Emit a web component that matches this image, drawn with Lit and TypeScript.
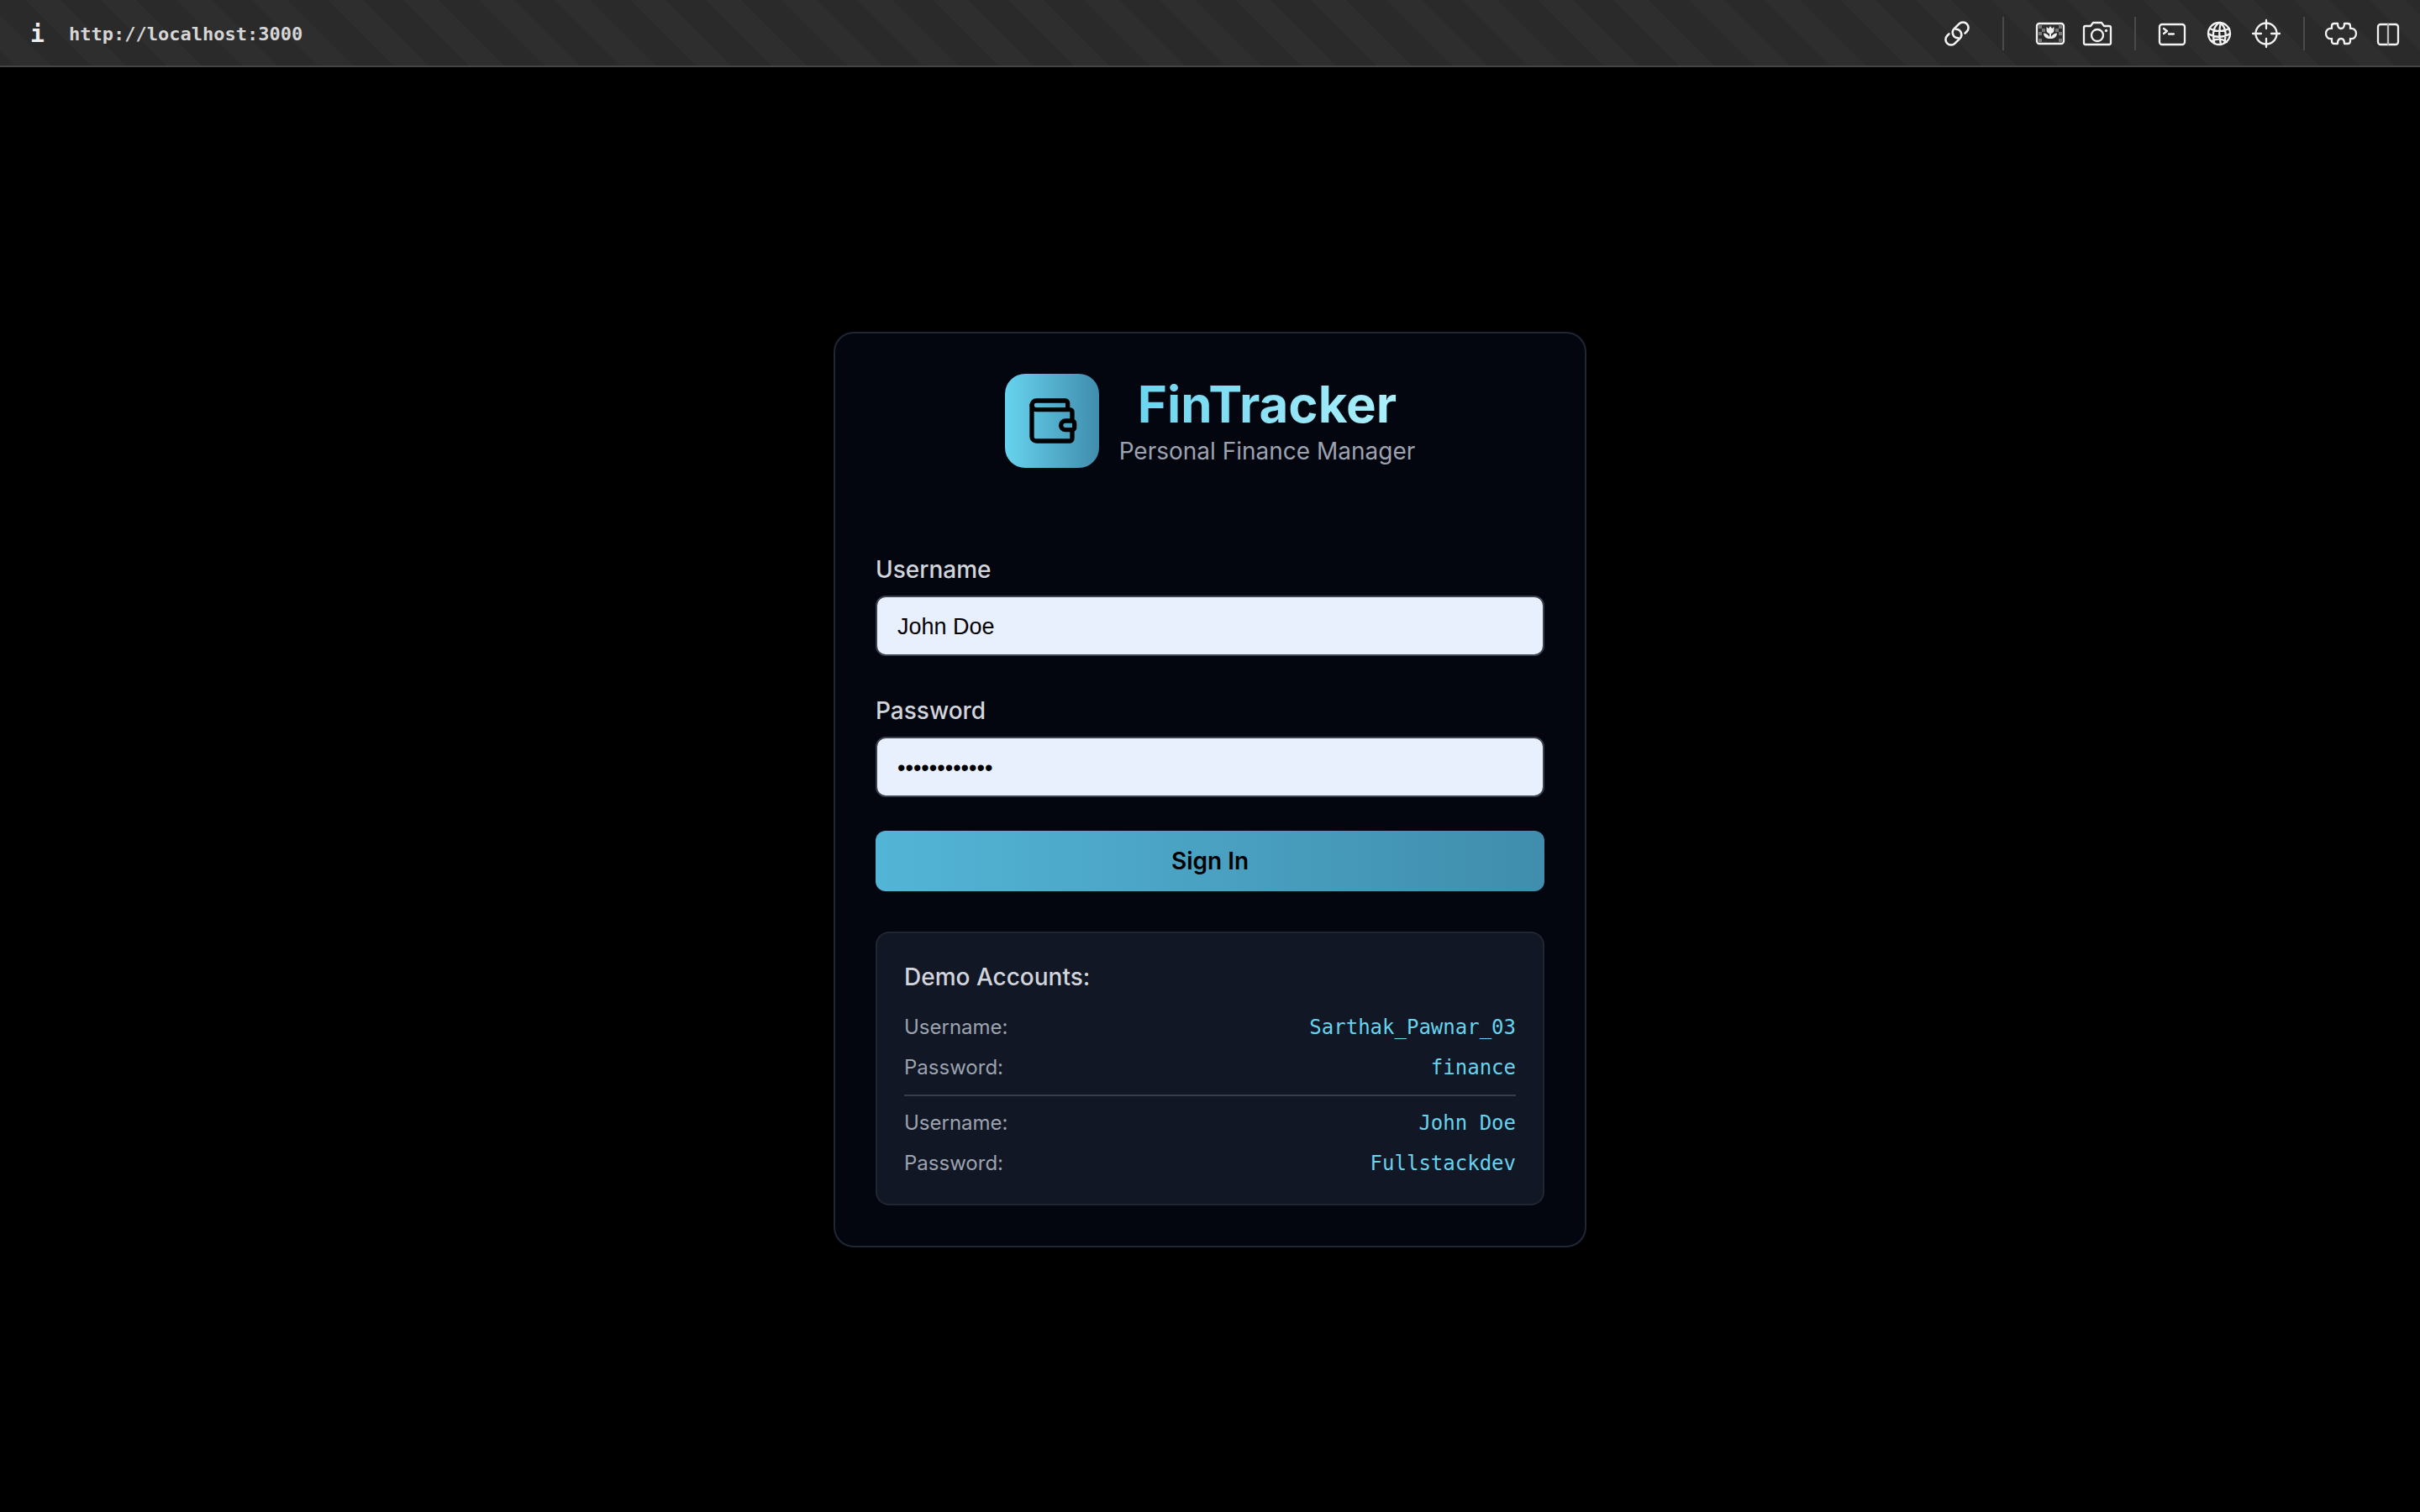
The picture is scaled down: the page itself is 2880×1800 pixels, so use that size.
import { LitElement, html, css, svg } from "lit";
import { customElement } from "lit/decorators.js";

const icons = {
  link: svg`<g transform="translate(22 22) rotate(-45)" stroke-width="2.600">
    <path d="M7 6.500H10a6.500 6.500 0 0 0 0-13H1.800A6.500 6.500 0 0 0-2.800 4.600"/>
    <path d="M7 6.500H10a6.500 6.500 0 0 0 0-13H1.800A6.500 6.500 0 0 0-2.800 4.600" transform="rotate(180)"/></g>`,
  picture: svg`<rect x="6" y="10" width="32" height="24" rx="3"/>
    <g fill="#777" stroke="none">${[0, 1, 2, 3, 4].map((r) =>
      [0, 1, 2, 3, 4, 5, 6].map((c) => ((r + c) % 2 ? "" : svg`<rect x=${8 + c * 4} y=${12 + r * 4} width="4" height="4"/>`)),
    )}</g>
    <path fill="#2b2b2b" stroke="none" d="M16 12h12v8l4 2v6l-5 4H17l-5-4v-6l4-2z"/>
    <path fill="#eee" stroke="none" d="M17.500 14l2.500 2 2-3 2 3 2.500-2v4a4.500 4.500 0 0 1-3.500 4v4c1.500-3 4-4.500 7-4.500 0 4-3 6.500-7 6.500h-2c-4 0-7-2.500-7-6.500 3 0 5.500 1.500 7 4.500v-4a4.500 4.500 0 0 1-3.500-4z"/>`,
  camera: svg`<path d="M8 13h6l3-4h10l3 4h6a2 2 0 0 1 2 2v18a2 2 0 0 1-2 2H8a2 2 0 0 1-2-2V15a2 2 0 0 1 2-2z"/>
    <circle cx="22" cy="24" r="7"/><circle cx="32.500" cy="18.500" r="1.700" fill="#eee" stroke="none"/>`,
  terminal: svg`<rect x="7" y="11" width="30" height="24" rx="3"/><path d="M12 16l4 3-4 3M18 22.500h6"/>`,
  globe: svg`<circle cx="22" cy="22" r="13"/>
    <path d="M22 9c-6 4-9 12-5.500 25M24 9c-2 7-2.500 16 0 26M23 9c6 4 8.500 13 5 24M11 16c7 4 15 4 23 0M9 22c8 5 18 5 26 0M13 31c6-3 13-3 18 1"/>`,
  target: svg`<circle cx="22" cy="22" r="12.500"/><path d="M22 6v10M22 28v10M6 22h10M28 22h10"/>`,
  puzzle: svg`<path d="M14 10h4c0 4 1 6 4 6s4-2 4-6h4c2 0 3 1 3 3v3c4-1 7 2 7 6s-3 7-7 6v3c0 2-1 3-3 3h-4c0-4-1-6-4-6s-4 2-4 6h-4c-2 0-3-1-3-3v-3c-4 1-7-2-7-6s3-7 7-6v-3c0-2 1-3 3-3z"/>`,
  columns: svg`<rect x="10" y="11" width="24" height="24" rx="3"/><path d="M22 11v24" stroke="#bbb"/>`,
};

const accounts = [
  { user: "Sarthak_Pawnar_03", pass: "finance" },
  { user: "John Doe", pass: "Fullstackdev" },
];

@customElement("app-root")
export class AppRoot extends LitElement {
  static styles = css`
    :host {
      display: flex;
      flex-direction: column;
      min-height: 100vh;
      background: #000;
      color: #d1d5db;
      font-family: Inter, sans-serif;
      font-size: 28px;
      line-height: 40px;
    }
    * { box-sizing: border-box; }
    .toolbar {
      display: flex;
      align-items: center;
      justify-content: space-between;
      height: 80px;
      padding: 2px 16px 0 36px;
      border-bottom: 2px solid #444;
      background: linear-gradient(45deg, #2a2a2a 17%, #2e2e2e 17% 40%, #2a2a2a 40% 67%, #2e2e2e 67% 90%, #2a2a2a 90%) 0 0 / 90px 90px;
    }
    .address { display: flex; align-items: center; gap: 30px; padding-top: 2px; font: 700 22px/28px "DejaVu Sans Mono", monospace; color: #d6d6d6; }
    .info, .tool { display: block; border: 0; padding: 0; background: none; color: #eee; }
    .info { width: 16px; font: 700 28px/28px "DejaVu Sans Mono", monospace; }
    .url { font: inherit; color: inherit; text-decoration: none; }
    .tools { display: flex; align-items: center; }
    .group { display: flex; align-items: center; gap: 12px; height: 40px; }
    .group + .group { margin-left: 22px; padding-left: 21px; border-left: 2px solid #4a4a4a; }
    .group + .group.wide { margin-left: 32px; padding-left: 33px; }
    .tool { width: 44px; height: 44px; }
    .tool svg { display: block; width: 44px; height: 44px; fill: none; stroke: #f2f2f2; stroke-width: 2.3; stroke-linecap: round; stroke-linejoin: round; }
    .stage { flex: 1; display: grid; place-items: center; padding: 32px; }
    .card {
      width: 100%;
      max-width: 896px;
      padding: 48px;
      border: 2px solid #1f2733;
      border-radius: 24px;
      background: #03050f;
    }
    .brand { display: flex; justify-content: center; gap: 24px; margin-bottom: 96px; text-align: center; }
    .logo {
      display: grid;
      place-items: center;
      width: 112px;
      height: 112px;
      border-radius: 24px;
      background: linear-gradient(90deg, #67d3ee, #408dad);
    }
    .logo svg { width: 64px; height: 64px; fill: none; stroke: #000; stroke-width: 2; stroke-linecap: round; stroke-linejoin: round; }
    .title {
      margin: 0;
      font-size: 60px;
      line-height: 72px;
      font-weight: 700;
      background: linear-gradient(90deg, #67d3ee, #b0f1fb);
      background-clip: text;
      color: transparent;
    }
    .tagline { margin: 0; color: #9ca3af; }
    .form { display: flex; flex-direction: column; gap: 40px; }
    .field { display: flex; flex-direction: column; gap: 6px; }
    .label { font-weight: 500; line-height: 50px; }
    .input {
      width: 100%;
      height: 72px;
      padding: 2px 24px 0;
      border: 2px solid #3b424f;
      border-radius: 12px;
      background: #e8effd;
      color: #000;
      font: 400 27px/40px "Liberation Sans", sans-serif;
    }
    .submit {
      height: 72px;
      border: 0;
      border-radius: 12px;
      background: linear-gradient(90deg, #53b5d6, #408dad);
      color: #000;
      font: 600 28px/40px Inter, sans-serif;
    }
    .demo {
      margin-top: 48px;
      padding: 32px;
      border: 2px solid #1f2733;
      border-radius: 16px;
      background: #111724;
    }
    .demo-title { margin: 0 0 24px; font-size: 28px; line-height: 40px; font-weight: 500; }
    .account { display: grid; gap: 16px; margin: 0; font-size: 24px; line-height: 32px; }
    .account + .account { margin-top: 16px; padding-top: 16px; border-top: 2px solid #363c49; }
    .row { display: flex; justify-content: space-between; color: #9ca3af; }
    .value { margin: 0; color: #67d3ee; font-family: "DejaVu Sans Mono", monospace; }
  `;

  private tool(name: keyof typeof icons) {
    return html`<button class="tool" type="button" aria-label=${name}>
      <svg viewBox="0 0 44 44" aria-hidden="true">${icons[name]}</svg>
    </button>`;
  }

  private row(label: string, value: string) {
    return html`<div class="row"><dt>${label}:</dt><dd class="value">${value}</dd></div>`;
  }

  render() {
    return html`
      <header class="toolbar">
        <div class="address">
          <button class="info" type="button">i</button>
          <a class="url" href="http://localhost:3000">http://localhost:3000</a>
        </div>
        <div class="tools">
          <div class="group">${this.tool("link")}</div>
          <div class="group wide">${this.tool("picture")}${this.tool("camera")}</div>
          <div class="group">${this.tool("terminal")}${this.tool("globe")}${this.tool("target")}</div>
          <div class="group">${this.tool("puzzle")}${this.tool("columns")}</div>
        </div>
      </header>
      <main class="stage">
        <section class="card">
          <div class="brand">
            <div class="logo">
              <svg viewBox="0 0 24 24" aria-hidden="true">
                <path d="M19 7V4a1 1 0 0 0-1-1H5a2 2 0 0 0 0 4h15a1 1 0 0 1 1 1v4h-3a2 2 0 0 0 0 4h3a1 1 0 0 0 1-1v-2a1 1 0 0 0-1-1" />
                <path d="M3 5v14a2 2 0 0 0 2 2h15a1 1 0 0 0 1-1v-4" />
              </svg>
            </div>
            <div>
              <h1 class="title">FinTracker</h1>
              <p class="tagline">Personal Finance Manager</p>
            </div>
          </div>
          <form class="form">
            <div class="field">
              <label class="label" for="username">Username</label>
              <input class="input" id="username" type="text" autocomplete="off" .value=${"John Doe"} />
            </div>
            <div class="field">
              <label class="label" for="password">Password</label>
              <input class="input" id="password" type="password" autocomplete="off" .value=${"Fullstackdev"} />
            </div>
            <button class="submit" type="button">Sign In</button>
          </form>
          <section class="demo">
            <h2 class="demo-title">Demo Accounts:</h2>
            ${accounts.map((a) => html`<dl class="account">${this.row("Username", a.user)}${this.row("Password", a.pass)}</dl>`)}
          </section>
        </section>
      </main>
    `;
  }
}
